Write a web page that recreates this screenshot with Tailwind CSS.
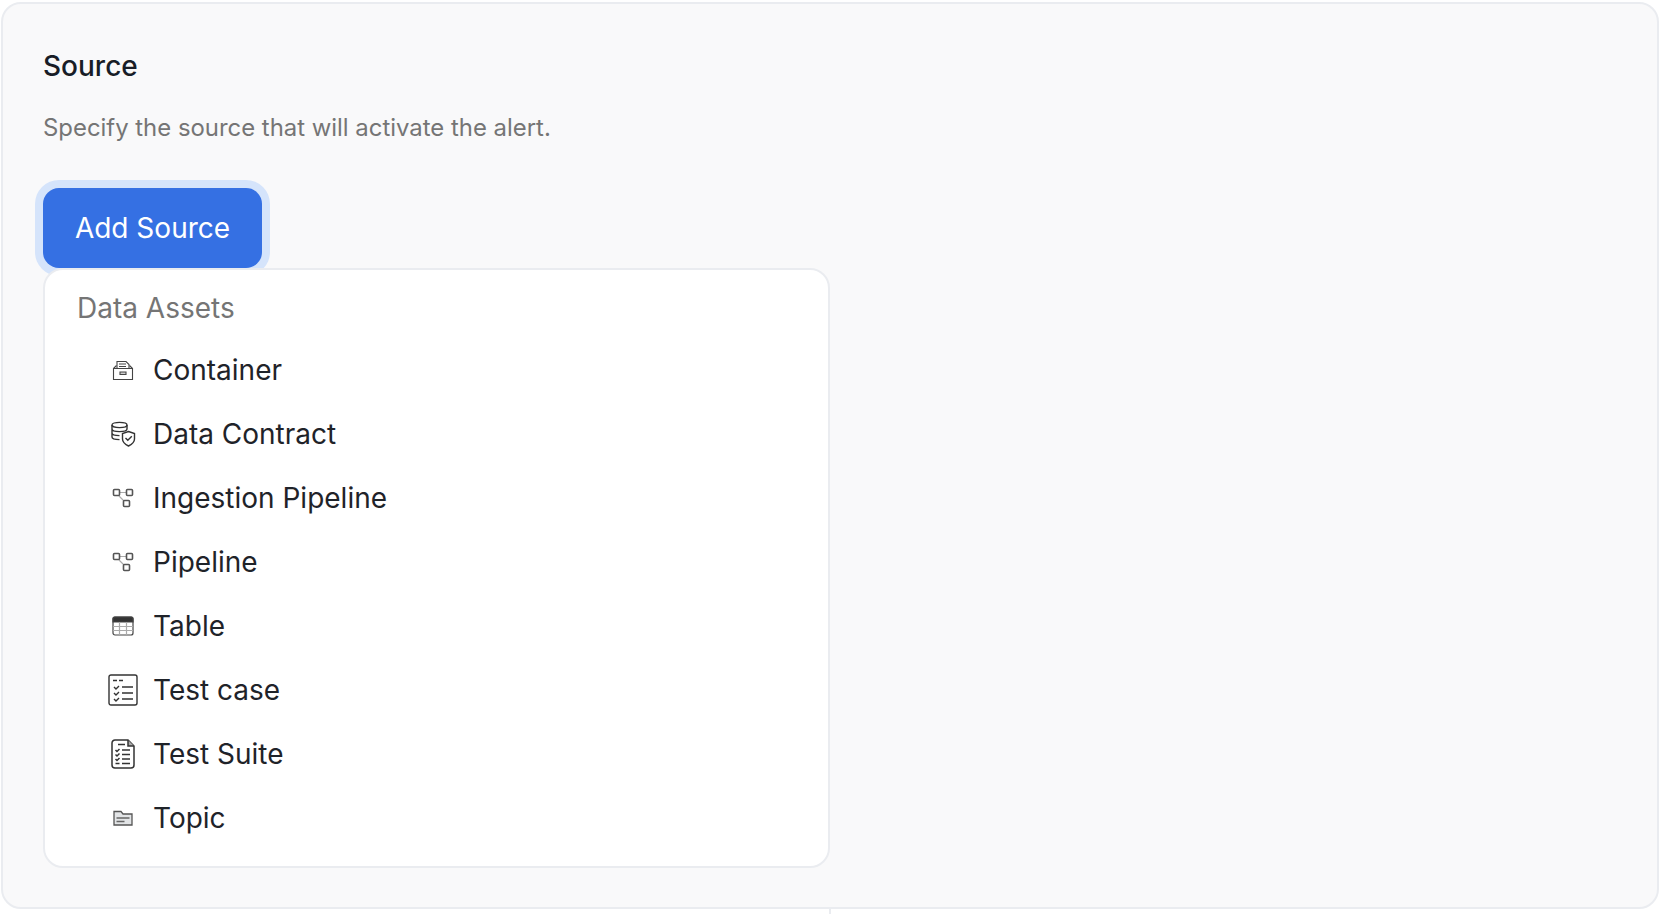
<!DOCTYPE html>
<html lang="en">
<head>
  <meta charset="UTF-8" />
  <meta name="viewport" content="width=device-width, initial-scale=1.0" />
  <title>Source</title>
  <script src="https://cdn.jsdelivr.net/npm/@tailwindcss/browser@4"></script>
</head>
<body class="bg-white font-['Inter',sans-serif] overflow-hidden">
  <div class="h-[914px] pl-[1px] pr-[3px] pt-[2px]">
    <!-- Source panel -->
    <div class="h-[907px] bg-[#f9f9fa] border-2 border-[#eaecf0] rounded-[20px] pl-[40px] pt-[42px]">
      <h2 class="text-[28px] leading-[40px] font-medium text-[#181d27]">Source</h2>
      <p class="mt-[23px] text-[23.9px] leading-[38px] text-[#757575]">Specify the source that will activate the alert.</p>

      <button type="button" class="mt-[41px] w-[219px] h-[80px] flex items-center justify-center bg-[#3570e3] rounded-[16px] ring-[8px] ring-[#d5e4fb] text-white text-[28px] leading-none">Add Source</button>

      <!-- Dropdown -->
      <div class="relative w-[787px] h-[600px] bg-white border-2 border-[#eaecf0] rounded-[20px] pt-[20px]">
        <div class="pl-[32px] text-[28px] leading-[36px] text-[#757575]">Data Assets</div>
        <ul class="mt-[12px] pl-[56px] text-[28px] text-[#1f2329]">
          <li class="h-[64px] flex items-center">
            <span class="w-[44px] flex justify-center">
              <svg width="22" height="22" viewBox="0 0 22 22" fill="none" stroke="#444" stroke-width="1.1"><path d="M5 9V2.500h9l3 3V9" /><path d="M7 5h7M7 7.500h7" /><path d="M1.500 9.500h19V20.500h-19z" fill="#fff" /><path d="M1.500 9.500l3-3M20.500 9.500l-3-3" /><path d="M8 13h6v2.500H8z" fill="#ccc" /></svg>
            </span>
            <span class="ml-[8px] leading-[36px]">Container</span>
          </li>
          <li class="h-[64px] flex items-center">
            <span class="w-[44px] flex justify-center">
              <svg width="26" height="26" viewBox="0 0 26 26" fill="none" stroke="#333" stroke-width="1.4"><ellipse cx="9.500" cy="4" rx="7.500" ry="2.600" /><path d="M2 4v12c0 1.500 3 2.600 7.500 2.600M17 4v4M2 8c0 1.500 3 2.600 7.500 2.600S17 9.500 17 8M2 12c0 1.500 3 2.600 7.500 2.600" /><path d="M18.500 10.500l6 2v5.500c0 3.500-3 5.500-6 7-3-1.500-6-3.500-6-7v-5.500z" fill="#fff" /><path d="M15.500 17l2.300 2.300 4-4" /></svg>
            </span>
            <span class="ml-[8px] leading-[36px]">Data Contract</span>
          </li>
          <li class="h-[64px] flex items-center">
            <span class="w-[44px] flex justify-center">
              <svg width="22" height="20" viewBox="0 0 22 20" fill="none" stroke="#555" stroke-width="1.600"><path d="M8 4.500h6M7 8l5 5" stroke="#aaa" stroke-width="1.200" /><rect x="1.500" y="1.500" width="6" height="6" rx="1" /><rect x="14.500" y="1.500" width="6" height="6" rx="1" /><rect x="11.500" y="12.500" width="6" height="6" rx="1" /></svg>
            </span>
            <span class="ml-[8px] leading-[36px]">Ingestion Pipeline</span>
          </li>
          <li class="h-[64px] flex items-center">
            <span class="w-[44px] flex justify-center">
              <svg width="22" height="20" viewBox="0 0 22 20" fill="none" stroke="#555" stroke-width="1.600"><path d="M8 4.500h6M7 8l5 5" stroke="#aaa" stroke-width="1.200" /><rect x="1.500" y="1.500" width="6" height="6" rx="1" /><rect x="14.500" y="1.500" width="6" height="6" rx="1" /><rect x="11.500" y="12.500" width="6" height="6" rx="1" /></svg>
            </span>
            <span class="ml-[8px] leading-[36px]">Pipeline</span>
          </li>
          <li class="h-[64px] flex items-center">
            <span class="w-[44px] flex justify-center">
              <svg width="22" height="20" viewBox="0 0 22 20" fill="none" stroke="#444" stroke-width="1.200"><rect x="1" y="1" width="20" height="18" rx="2" /><path d="M1 2.500a1.500 1.500 0 0 1 1.500-1.500h17a1.500 1.500 0 0 1 1.500 1.500V6H1z" fill="#333" /><path d="M1 10.500h20M1 14.500h20M7.500 6v13M14.500 6v13" stroke="#aaa" /></svg>
            </span>
            <span class="ml-[8px] leading-[36px]">Table</span>
          </li>
          <li class="h-[64px] flex items-center">
            <span class="w-[44px] flex justify-center">
              <svg width="30" height="32" viewBox="0 0 30 32" fill="none" stroke="#333" stroke-width="1.400"><rect x="1" y="1" width="28" height="30" rx="2" /><path d="M5 6.500h4M11 6.500h4M14 13h11M14 19h11M14 25h11" /><path d="M6 13l2 2 3-3M6 19l2 2 3-3M6 25l2 2 3-3" /></svg>
            </span>
            <span class="ml-[8px] leading-[36px]">Test case</span>
          </li>
          <li class="h-[64px] flex items-center">
            <span class="w-[44px] flex justify-center">
              <svg width="24" height="30" viewBox="0 0 24 30" fill="none" stroke="#333" stroke-width="1.500"><path d="M4 1h13l6 6v19a3 3 0 0 1-3 3H4a3 3 0 0 1-3-3V4a3 3 0 0 1 3-3z" /><path d="M17 1v6h6" fill="#aaa" /><path d="M7 5.500h7M11 11h8M11 15.500h8M11 20h8M11 24.500h8" /><path d="M4.500 11l1.500 1.500 2.500-2.500M4.500 15.500l1.500 1.500 2.500-2.500M4.500 20l1.500 1.500 2.500-2.500M4.500 24.500h4" /></svg>
            </span>
            <span class="ml-[8px] leading-[36px]">Test Suite</span>
          </li>
          <li class="h-[64px] flex items-center">
            <span class="w-[44px] flex justify-center">
              <svg width="20" height="16" viewBox="0 0 20 16" fill="#e2e4e6" stroke="#555" stroke-width="1.300"><path d="M1 15V1.500h7l2 2.500h9V15z" /><path d="M3.500 8h13M3.500 11.500h8" stroke="#666" /></svg>
            </span>
            <span class="ml-[8px] leading-[36px]">Topic</span>
          </li>
        </ul>
      </div>
    </div>
    <!-- Divider peeking out below the panel -->
    <div class="ml-[828px] w-[2px] h-[5px] bg-[#eaecf0]"></div>
  </div>
</body>
</html>
